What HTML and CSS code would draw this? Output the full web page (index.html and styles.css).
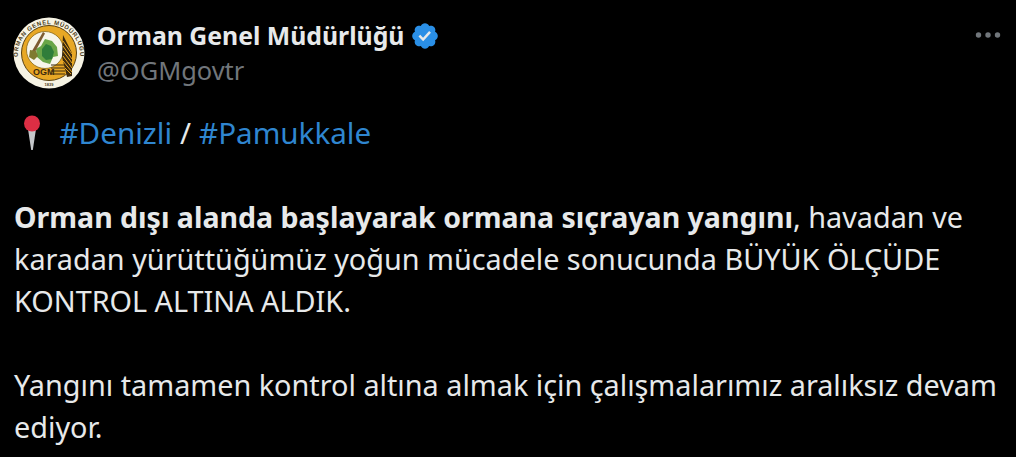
FILE: index.html
```html
<!DOCTYPE html>
<html lang="en">
<head>
    <meta charset="UTF-8" />
    <title>Orman Genel Müdürlüğü</title>
    <link rel="stylesheet" href="styles.css">
</head>
<body>
    <div class="tweet">
        <div class="tweet-header">
            <div class="author">
                <!-- Logo -->
                <svg class="avatar" width="72" height="72" viewBox="0 0 72 72">
                    <defs>
                        <path id="logoArc" d="M6 47A31.200 31.200 0 1 1 66 47"/>
                    </defs>
                    <circle cx="36" cy="36" r="35.500" fill="#f6f3e4"/>
                    <circle cx="36" cy="36" r="27.500" fill="#e8a825" stroke="#5a4212" stroke-width="1"/>
                    <circle cx="32" cy="33" r="18.500" fill="#f7f5ea" stroke="#8a6a1a" stroke-width="0.800"/>
                    <text class="logo-ring"><textPath href="#logoArc" startOffset="50%" text-anchor="middle">ORMAN GENEL MÜDÜRLÜĞÜ</textPath></text>
                    <path d="M32 22l7 2 5 6 1 9-5 1-3 7-7-2-6-5-1-8 5-3z" fill="#6aa548"/>
                    <path d="M33 27l5 2 3 6-2 7-6 1-4-4v-7z" fill="#2f7d3a"/>
                    <path d="M19 34L30 15l2 1.500L22 35z" fill="#7d5b32"/>
                    <path d="M17 33l6 1 2 5-4 4-5-3z" fill="#7f7a30"/>
                    <path d="M50 18l9 18v23l-5 1-5-20z" fill="#3d2a0e"/>
                    <path d="M50 24l9 13M50 29l9 13M50 34l9 12M50 39l9 12M50 44l9 11M50 49l8 8" stroke="#e8a825" stroke-width="1" fill="none"/>
                    <path d="M38 48h14M38 51h14M38 54h14M38 57h14" stroke="#3d2a0e" stroke-width="1" fill="none"/>
                    <text class="logo-ogm" x="20" y="58">OGM</text>
                    <text class="logo-year" x="36" y="69" text-anchor="middle">1839</text>
                </svg>
                <div class="names">
                    <div class="name-row">
                        <span class="name">Orman Genel Müdürlüğü</span>
                        <svg class="verified" width="30" height="30" viewBox="0 0 24 24">
                            <path fill="#2a8fe6" d="M22.250 12c0-1.430-.880-2.670-2.190-3.340.460-1.390.200-2.900-.810-3.910s-2.520-1.270-3.910-.810c-.660-1.310-1.910-2.190-3.340-2.190s-2.670.880-3.330 2.190c-1.400-.460-2.910-.200-3.920.810s-1.260 2.520-.800 3.910c-1.310.670-2.200 1.910-2.200 3.340s.890 2.670 2.200 3.340c-.460 1.390-.210 2.900.800 3.910s2.520 1.260 3.910.810c.670 1.310 1.910 2.190 3.340 2.190s2.680-.880 3.340-2.190c1.390.450 2.900.200 3.910-.810s1.270-2.520.810-3.910c1.310-.670 2.190-1.910 2.190-3.340z"/>
                            <path fill="#e7e9ea" d="M10.540 16.200l-3.750-3.740 1.410-1.420 2.260 2.260 4.840-5.270 1.470 1.360z"/>
                        </svg>
                    </div>
                    <div class="handle">@OGMgovtr</div>
                </div>
            </div>
            <svg class="more" width="26" height="8" viewBox="0 0 26 8">
                <circle cx="3.500" cy="4" r="2.700"/>
                <circle cx="13" cy="4" r="2.700"/>
                <circle cx="22.500" cy="4" r="2.700"/>
            </svg>
        </div>

        <div class="tweet-body">
            <p class="tags">
                <svg class="pin" width="20" height="38" viewBox="0 0 20 38">
                    <path d="M6 15h8L10.800 36H9.200z" fill="#c4c7ca"/>
                    <circle cx="10" cy="9.500" r="8" fill="#dd2e44"/>
                </svg>
                <a href="#">#Denizli</a> <span>/</span> <a href="#">#Pamukkale</a>
            </p>
            <p><b>Orman dışı alanda başlayarak ormana sıçrayan yangını</b>, havadan ve karadan yürüttüğümüz yoğun mücadele sonucunda BÜYÜK ÖLÇÜDE KONTROL ALTINA ALDIK.</p>
            <p>Yangını tamamen kontrol altına almak için çalışmalarımız aralıksız devam ediyor.</p>
        </div>
    </div>
</body>
</html>
```

FILE: styles.css
```css
html, body {
    margin: 0;
    padding: 0;
    height: 100%;
    overflow: hidden;
    background-color: #000000;
}
body {
    font-family: "Noto Sans", "Open Sans", sans-serif;
    color: #e7e9ea;
}
.tweet {
    padding: 0 14px;
}
.tweet-header {
    display: flex;
    justify-content: space-between;
    align-items: flex-start;
    padding-top: 17px;
}
.author {
    display: flex;
    align-items: center;
    gap: 12px;
}
.avatar {
    display: block;
    margin-left: -1px;
}
.logo-ring {
    font-family: "Liberation Sans", sans-serif;
    font-size: 6px;
    font-weight: 700;
    letter-spacing: 0.7px;
    fill: #4a3a18;
}
.logo-ogm {
    font-family: "Liberation Sans", sans-serif;
    font-size: 9px;
    font-weight: 700;
    fill: #3d2a0e;
}
.logo-year {
    font-family: "Liberation Sans", sans-serif;
    font-size: 4px;
    font-weight: 700;
    fill: #4a3a18;
}
.names {
    display: flex;
    flex-direction: column;
}
.name-row {
    display: flex;
    align-items: center;
    gap: 6px;
}
.name {
    font-size: 24.800px;
    font-weight: 700;
    line-height: 35px;
}
.verified {
    display: block;
}
.handle {
    font-size: 25.400px;
    line-height: 35px;
    color: #71767b;
}
.more {
    fill: #71767b;
    margin: 14px 1px 0 0;
}
.tweet-body {
    padding-top: 23px;
    width: 990px;
}
.tweet-body p {
    margin: 0 0 42px;
    font-size: 28.800px;
    line-height: 42px;
}
.tweet-body p:last-child {
    margin-bottom: 0;
}
.tweet-body b {
    font-weight: 700;
    font-size: 28.500px;
}
.tags {
    display: flex;
    align-items: center;
    gap: 8px;
}
.tweet-body .tags {
    font-size: 29.600px;
}
.pin {
    display: block;
    margin: 0 9.500px 0 8px;
}
.tweet-body a {
    color: #2f86d0;
    text-decoration: none;
}
```
